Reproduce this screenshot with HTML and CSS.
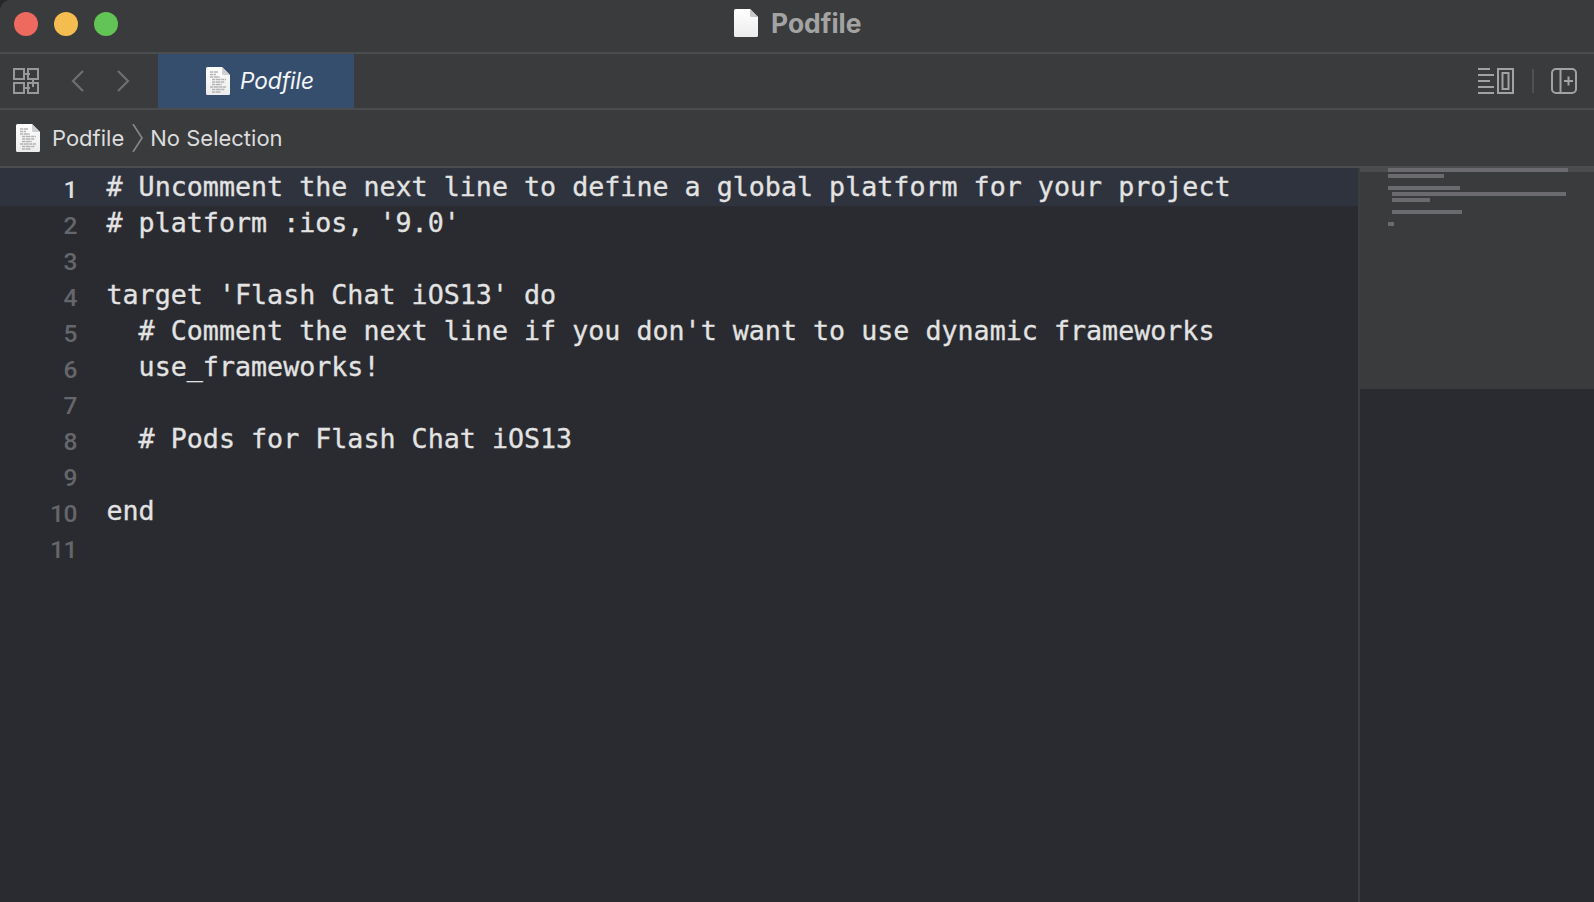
FILE: index.html
```html
<!DOCTYPE html>
<html lang="en">
<head>
<meta charset="utf-8">
<title>Podfile</title>
<link rel="stylesheet" href="styles.css">
</head>
<body>
<svg class="defs" width="0" height="0" aria-hidden="true">
  <defs>
    <linearGradient id="paper" x1="0" y1="0" x2="0" y2="1"><stop offset="0" stop-color="#ffffff"/><stop offset="1" stop-color="#ececec"/></linearGradient>
    <symbol id="doc-lines" viewBox="0 0 24 28">
      <path d="M1.500 0H16L24 8V26.500A1.500 1.500 0 0 1 22.500 28H1.500A1.500 1.500 0 0 1 0 26.500V1.500A1.500 1.500 0 0 1 1.500 0Z" fill="url(#paper)"/>
      <path d="M16 0L24 8H17.500A1.500 1.500 0 0 1 16 6.500Z" fill="#cfcfcf"/>
      <path d="M4 5H12M4 7.500H10M4 10H14M6 12.500H20M6 15H19M6 17.500H16M4 20H20M6 22.500H19M6 25H15" stroke="#b4b4b4" stroke-width="1.300" stroke-dasharray="3 .6 5 .6" fill="none"/>
    </symbol>
  </defs>
</svg>
<div class="window">
  <header class="titlebar">
    <div class="lights">
      <span class="light red"></span>
      <span class="light yellow"></span>
      <span class="light green"></span>
    </div>
    <div class="title">
      <svg class="title-doc" viewBox="0 0 24 28">
        <path d="M1.500 0H16L24 8V26.500A1.500 1.500 0 0 1 22.500 28H1.500A1.500 1.500 0 0 1 0 26.500V1.500A1.500 1.500 0 0 1 1.500 0Z" fill="url(#paper)"/>
        <path d="M16 0L24 8H17.500A1.500 1.500 0 0 1 16 6.500Z" fill="#c9c9c9"/>
      </svg>
      <span>Podfile</span>
    </div>
  </header>

  <nav class="toolbar">
    <div class="nav-icons">
      <svg class="grid-icon" viewBox="0 0 26 26" fill="none" stroke="#98989a" stroke-width="2">
        <path d="M1 1H11V11H1ZM15 1H25V11H15ZM1 15H11V25H1ZM15 15H25V25H15ZM11 6H17M20 11V19M11 20H17"/>
      </svg>
      <svg class="chevron-icon" viewBox="0 0 14 24" fill="none" stroke="#6f6f71" stroke-width="2.200"><path d="M12 2L2 12L12 22"/></svg>
      <svg class="chevron-icon" viewBox="0 0 14 24" fill="none" stroke="#6f6f71" stroke-width="2.200"><path d="M2 2L12 12L2 22"/></svg>
    </div>
    <div class="tab">
      <svg class="doc"><use href="#doc-lines"/></svg>
      <span>Podfile</span>
    </div>
    <div class="tool-right">
      <svg class="inspector-icon" viewBox="0 0 36 26" fill="none" stroke="#a2a2a4" stroke-width="2">
        <path d="M0 1H12M0 7H16M0 13H12M0 19H16M0 25H16"/>
        <path d="M20 1H35V25H20Z"/>
        <path d="M24.500 5H30.500V21H24.500Z"/>
      </svg>
      <span class="tool-sep"></span>
      <svg class="split-icon" viewBox="0 0 26 26" fill="none" stroke="#a2a2a4" stroke-width="2">
        <rect x="1" y="1" width="24" height="24" rx="4"/>
        <path d="M9.500 1V25M13 13H22M17.500 8.500V17.500"/>
      </svg>
    </div>
  </nav>

  <div class="crumbs">
    <svg class="doc crumb-doc"><use href="#doc-lines"/></svg>
    <span>Podfile</span>
    <svg class="crumb-sep" viewBox="0 0 12 28" fill="none" stroke="#88888a" stroke-width="1.600"><path d="M1 0L10 14L1 28"/></svg>
    <span>No Selection</span>
  </div>

  <main class="editor">
    <div class="code">
      <div class="line current"><span class="num">1</span><span class="text"># Uncomment the next line to define a global platform for your project</span></div>
      <div class="line"><span class="num">2</span><span class="text"># platform :ios, '9.0'</span></div>
      <div class="line"><span class="num">3</span><span class="text"></span></div>
      <div class="line"><span class="num">4</span><span class="text">target 'Flash Chat iOS13' do</span></div>
      <div class="line"><span class="num">5</span><span class="text">  # Comment the next line if you don't want to use dynamic frameworks</span></div>
      <div class="line"><span class="num">6</span><span class="text">  use_frameworks!</span></div>
      <div class="line"><span class="num">7</span><span class="text"></span></div>
      <div class="line"><span class="num">8</span><span class="text">  # Pods for Flash Chat iOS13</span></div>
      <div class="line"><span class="num">9</span><span class="text"></span></div>
      <div class="line"><span class="num">10</span><span class="text">end</span></div>
      <div class="line"><span class="num">11</span><span class="text"></span></div>
    </div>
    <aside class="minimap">
      <div class="viewport">
        <div class="mini-row first"><i style="width:180px"></i></div>
        <div class="mini-row"><i style="width:56px"></i></div>
        <div class="mini-row"></div>
        <div class="mini-row"><i style="width:72px"></i></div>
        <div class="mini-row in"><i style="width:174px"></i></div>
        <div class="mini-row in"><i style="width:38px"></i></div>
        <div class="mini-row"></div>
        <div class="mini-row in"><i style="width:70px"></i></div>
        <div class="mini-row"></div>
        <div class="mini-row"><i style="width:6px"></i></div>
      </div>
    </aside>
  </main>
</div>
</body>
</html>
```

FILE: styles.css
```css
* { box-sizing: border-box; }
html, body { margin: 0; height: 100%; background: #26272a; overflow: hidden; }
.defs { display: block; height: 0; }
.window {
  width: 1594px;
  height: 902px;
  display: flex;
  flex-direction: column;
  background: #2a2b30;
  font-family: Inter, "Liberation Sans", sans-serif;
  border-top-left-radius: 10px;
  overflow: hidden;
}
.titlebar {
  height: 54px;
  flex: none;
  display: flex;
  align-items: center;
  background: #3a3b3d;
  border-bottom: 2px solid #4b4c4e;
  padding: 0 14px;
  position: relative;
}
.lights { display: flex; gap: 16px; padding-bottom: 4px; }
.light { width: 24px; height: 24px; border-radius: 50%; display: block; }
.red { background: #ee6a5f; }
.yellow { background: #f5bd4f; }
.green { background: #61c454; }
.title {
  position: absolute;
  left: 734px;
  top: 8px;
  display: flex;
  align-items: center;
  gap: 13px;
  font-size: 26.4px;
  font-weight: 700;
  color: #a3a3a4;
  line-height: 30px;
}
.title-doc { width: 24px; height: 28px; display: block; }
.toolbar {
  height: 56px;
  flex: none;
  display: flex;
  align-items: stretch;
  background: #3a3b3d;
  border-bottom: 2px solid #4b4c4e;
}
.nav-icons { width: 158px; flex: none; display: flex; align-items: center; padding-left: 13px; }
.grid-icon { width: 26px; height: 26px; margin-right: 32px; }
.chevron-icon { width: 14px; height: 24px; margin-right: 31px; }
.chevron-icon + .chevron-icon { margin: 0; }
.tab {
  width: 196px;
  display: flex;
  align-items: center;
  justify-content: center;
  gap: 10px;
  background: #364e6e;
  color: #f4f6f8;
  font-style: italic;
  font-size: 22.6px;
  padding: 0 0 1px 8px;
}
.doc { width: 24px; height: 28px; display: block; flex: none; }
.tool-right { margin-left: auto; display: flex; align-items: center; padding-right: 17px; }
.inspector-icon { width: 36px; height: 26px; }
.tool-sep { width: 2px; height: 24px; background: #4f5052; margin: 0 17px 0 18px; }
.split-icon { width: 26px; height: 26px; }
.crumbs {
  height: 58px;
  flex: none;
  display: flex;
  align-items: center;
  background: #3a3b3d;
  border-bottom: 2px solid #4b4c4e;
  padding-left: 16px;
  color: #dcdcdc;
  font-size: 22px;
}
.crumb-doc { margin-right: 12px; }
.crumb-sep { width: 12px; height: 28px; margin: 0 6px 0 8px; }
.editor { flex: 1; display: flex; min-height: 0; }
.code { width: 1358px; flex: none; }
.line { height: 36px; display: flex; }
.line.current { height: 38px; background: #2f333d; }
.num {
  width: 77px;
  flex: none;
  text-align: right;
  font-family: Roboto, sans-serif;
  font-size: 24.5px;
  font-weight: 500;
  letter-spacing: -0.4px;
  line-height: 40px;
  color: #66676a;
}
.current .num { color: #dfdfe0; line-height: 44px; }
.text {
  margin-left: 29.5px;
  white-space: pre;
  font-family: "DejaVu Sans Mono", monospace;
  font-size: 26.68px;
  line-height: 34px;
  color: #e3e3e3;
  -webkit-text-stroke: 0.3px #e3e3e3;
}
.current .text { line-height: 38px; }
.minimap { flex: 1; border-left: 2px solid #3c3d40; }
.viewport { height: 221px; background: #3a3b3d; }
.mini-row { height: 6px; padding-left: 28px; }
.mini-row.in { padding-left: 32px; }
.mini-row.first { background: linear-gradient(#4b4c4e 4px, transparent 4px); }
.mini-row i { display: block; height: 4px; background: #6b6b6f; }
```
